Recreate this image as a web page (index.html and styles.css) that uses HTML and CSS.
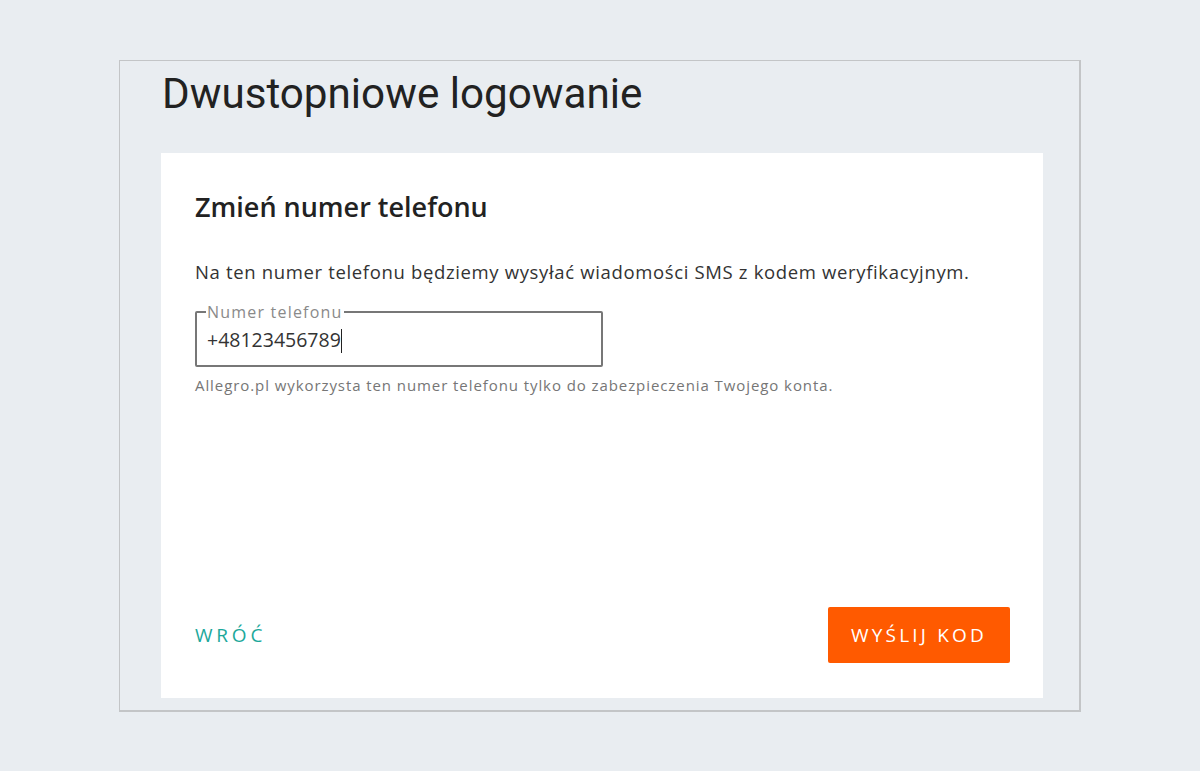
FILE: index.html
```html
<!DOCTYPE html>
<html lang="pl">
 <head>
  <meta charset="utf-8"/>
  <title>Dwustopniowe logowanie</title>
  <link rel="stylesheet" href="styles.css">
 </head>
 <body>
  <div class="frame">
   <h1 class="page-title">Dwustopniowe logowanie</h1>
   <div class="card">
    <h2 class="card-title">Zmień numer telefonu</h2>
    <p class="lead">Na ten numer telefonu będziemy wysyłać wiadomości SMS z kodem weryfikacyjnym.</p>
    <fieldset class="phone-field">
     <legend>Numer telefonu</legend>
     <div class="phone-value">+48123456789<span class="caret"></span></div>
    </fieldset>
    <p class="hint">Allegro.pl wykorzysta ten numer telefonu tylko do zabezpieczenia Twojego konta.</p>
    <div class="actions">
     <a class="back-link" href="#">Wróć</a>
     <button class="send-btn" type="button">Wyślij kod</button>
    </div>
   </div>
  </div>
 </body>
</html>
```

FILE: styles.css
```css
body {
    margin: 0;
    background-color: #e9edf1;
    font-family: 'Open Sans', sans-serif;
    color: #333;
}

.frame {
    box-sizing: border-box;
    width: 962px;
    margin: 60px 0 0 119px;
    padding: 0 36px 12px 41px;
    border: 1px solid #c3c5c7;
    border-right-width: 2px;
    border-bottom-width: 2px;
}

.page-title {
    font-family: 'Roboto', sans-serif;
    font-weight: 400;
    font-size: 42.2px;
    line-height: 48px;
    color: #222;
    margin: 0;
    padding: 9px 0 35px 1px;
}

.card {
    background: #fff;
    height: 545px;
    box-sizing: border-box;
    padding: 37px 33px 35px 34px;
    display: flex;
    flex-direction: column;
}

.card-title {
    font-size: 27px;
    font-weight: 600;
    line-height: 34px;
    color: #222;
    margin: 0 0 35px;
}

.lead {
    font-size: 18.5px;
    letter-spacing: 0.65px;
    line-height: 26px;
    margin: 0 0 18px;
    color: #333;
}

.phone-field {
    width: 408px;
    box-sizing: border-box;
    margin: 0;
    padding: 0 10px 12px;
    border: 2px solid #777;
    border-radius: 2px;
}

.phone-field legend {
    font-size: 16px;
    letter-spacing: 1.2px;
    line-height: 18px;
    color: #8a8a8a;
    padding: 0 1px;
    margin-left: -1px;
}

.phone-value {
    font-size: 19.5px;
    line-height: 26px;
    color: #333;
    margin-top: 6px;
}

.caret {
    display: inline-block;
    width: 1px;
    height: 24px;
    background: #222;
    vertical-align: -6px;
}

.hint {
    font-size: 15px;
    letter-spacing: 0.92px;
    line-height: 20px;
    color: #767676;
    margin: 8px 0 0;
}

.actions {
    margin-top: auto;
    display: flex;
    justify-content: space-between;
    align-items: center;
}

.back-link {
    color: #1ca89b;
    text-decoration: none;
    text-transform: uppercase;
    font-size: 19px;
    font-weight: 400;
    letter-spacing: 3.8px;
}

.send-btn {
    background: #ff5a00;
    color: #fff;
    border: 0;
    border-radius: 2px;
    width: 182px;
    height: 56px;
    font-family: 'Open Sans', sans-serif;
    font-size: 19px;
    font-weight: 400;
    letter-spacing: 3.2px;
    text-transform: uppercase;
    cursor: pointer;
}
```
